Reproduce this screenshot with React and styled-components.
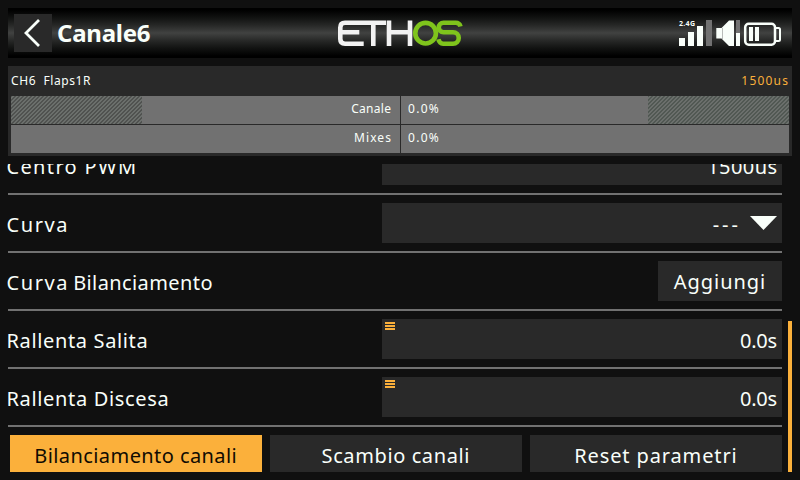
import React from "react";
import styled, { createGlobalStyle } from "styled-components";

const color = {
  screen: "#101010",
  panel: "#292929",
  track: "#717171",
  accent: "#fbb03b",
  text: "#f9fffa",
};

const GlobalStyle = createGlobalStyle`
  *, *::before, *::after { box-sizing: border-box; }
  body { margin: 0; background: ${color.screen}; }
`;

const Screen = styled.main`
  width: 800px;
  height: 480px;
  padding: 8px;
  overflow: hidden;
  background: ${color.screen};
  color: ${color.text};
  font-family: "Noto Sans", "Open Sans", sans-serif;
  font-size: 20px;
  white-space: pre;
`;

const Text = styled.span`
  letter-spacing: ${(p) => p.$ls || 0}px;
  margin-right: ${(p) => -(p.$ls || 0)}px;
`;

const Header = styled.header`
  display: grid;
  grid-template-columns: 322px 1fr auto;
  height: 50px;
  padding: 6px 10px 6px 6px;
  background: linear-gradient(#000 4%, #121312 20%, #262726 34%, #414241 50%, #262726 66%, #121312 80%, #000 96%);
`;

const TitleGroup = styled.div`
  display: flex;
  align-items: center;
  gap: 5px;
`;

const BackButton = styled.button`
  width: 38px;
  height: 38px;
  padding: 0;
  border: 0;
  background: ${color.panel};
  svg { display: block; }
`;

const Title = styled.h1`
  margin: 0;
  font-size: 24px;
  line-height: 38px;
  font-weight: 700;
  letter-spacing: -0.25px;
`;

const Logo = styled.svg`
  display: block;
  width: 128px;
  height: 38px;
`;

const StatusIcons = styled.svg`
  display: block;
  width: 104px;
  height: 38px;
`;

const Monitor = styled.section`
  height: 90px;
  margin-top: 8px;
  padding: 0 3px 3px;
  background: ${color.panel};
  font-size: 12px;
`;

const MonitorHead = styled.div`
  display: flex;
  justify-content: space-between;
  height: 30px;
  padding-right: 1px;
  line-height: 30px;
`;

const PulseWidth = styled.span`
  color: ${color.accent};
`;

const Bars = styled.div`
  display: grid;
  gap: 1px;
`;

const Bar = styled.div`
  display: grid;
  grid-template-columns: 131px 258px 1px 247px 141px;
  height: 28px;
  line-height: 25px;
  background: ${color.track};
`;

const Limit = styled.div`
  background: ${(p) =>
    p.$tone
      ? `repeating-linear-gradient(135deg, ${p.$tone} 0 1.414px, #6b6f6c 1.414px 2.828px)`
      : "none"};
`;

const BarName = styled.div`
  padding-right: 9px;
  text-align: right;
`;

const Center = styled.div`
  background: ${color.panel};
`;

const BarValue = styled.div`
  padding-left: 7px;
`;

const Viewport = styled.div`
  display: grid;
  grid-template-columns: 774px 4px;
  column-gap: 6px;
  height: 308px;
  margin: 8px 0 0 -8px;
  padding-left: 8px;
  overflow: hidden;
`;

const Form = styled.div`
  margin-top: -27px;
`;

const Row = styled.div`
  display: flex;
  justify-content: space-between;
  height: 58px;
  padding: 8px 0;
  border-bottom: 2px solid ${color.track};
`;

const Label = styled.div`
  margin-left: -1.5px;
  padding-top: 2px;
  line-height: 40px;
`;

const Field = styled.div`
  display: flex;
  align-items: flex-start;
  justify-content: flex-end;
  width: 400px;
  height: 40px;
  padding: 2px 5px 0 3px;
  background: ${color.panel};
  line-height: 40px;
`;

const OptionsMark = styled.span`
  display: grid;
  gap: 1px;
  width: 10px;
  margin: 1px auto 0 0;
  &::before, &::after, i { content: ""; height: 2px; background: ${color.accent}; }
`;

const Arrow = styled.svg`
  width: 27px;
  height: 14px;
  margin: 11px 0 0 12px;
`;

const Button = styled.button`
  height: 40px;
  padding: 2px 1px 0 0;
  border: 0;
  width: ${(p) => p.$width}px;
  background: ${(p) => (p.$active ? color.accent : color.panel)};
  color: ${(p) => (p.$active ? "#100b02" : color.text)};
  font: inherit;
  line-height: 38px;
`;

const Actions = styled.div`
  display: flex;
  gap: 8px;
  padding: 8px 0 0 2px;
`;

const ScrollThumb = styled.div`
  height: 151px;
  margin-top: 157px;
  background: ${color.accent};
`;

const bars = [
  { name: "Canale", ls: 0.3, left: "#505250", right: "#515853" },
  { name: "Mixes", ls: 1.1 },
];

const rows = [
  { label: [["Centro PWM", 1.35]], value: ["1500us", 0.4] },
  { label: [["Curva", 1.6]], value: ["---", 3], select: true },
  { label: [["Curva", 1.6], [" Bilanciamento", 0.4]], add: true },
  { label: [["Rallenta Salita", 0.64]], value: ["0.0s", -0.3], options: true },
  { label: [["Rallenta Discesa", 0.66]], value: ["0.0s", -0.3], options: true },
];

const actions = [
  { text: "Bilanciamento canali", ls: 0.42, active: true },
  { text: "Scambio canali", ls: 0.6 },
  { text: "Reset parametri", ls: 0.87 },
];

function EthosLogo() {
  return (
    <Logo viewBox="336 14 128 38" aria-label="ETHOS">
      <g fill="none" strokeWidth="4.6">
        <path stroke="#f2f2f2" d="M386 22.7H345q-4.7 0-4.7 4.7v11.6q0 4.7 4.7 4.7h18.7M340.3 32.2h19M373.3 22.7V46M389 20.4V46M410 20.4V46M389 32.2h21" />
        <circle cx="425.6" cy="33.2" r="10.3" stroke="#7fc41c" />
        <path stroke="#7fc41c" d="M460.5 26.5q-1-3.8-4.8-3.8h-12.2a4.75 4.75 0 0 0 0 9.5h9.500a5.75 5.75 0 0 1 0 11.500h-10q-3.500 0-4.600-4.400" />
      </g>
    </Logo>
  );
}

function Status() {
  return (
    <StatusIcons viewBox="678 14 104 38">
      <text x="679" y="26" fontSize="7" fontWeight="700" fill={color.text} textLength="16">2.4G</text>
      <path fill={color.text} d="M679 38h6v8h-6zM688 32h6v14h-6zM697 26h6v20h-6z" />
      <path fill={color.track} d="M706 20h6v26h-6zM736 20h4v13h-4z" />
      <path fill={color.text} d="M716.3 28h5.2l7.500-7.500h5v25.500h-5l-7.500-7.500h-5.200zM736 33h4v13h-4z" />
      <path fill="none" stroke="#b8bcb9" strokeWidth="1" d="M722.500 28v11" />
      <rect x="745.2" y="23.800" width="29.800" height="20.900" rx="3.500" fill="none" stroke={color.text} strokeWidth="2.500" />
      <path fill="none" stroke={color.text} strokeWidth="2" d="M776 28h2.500q1.500 0 1.500 1.500v10q0 1.500-1.500 1.500H776" />
      <path fill={color.text} d="M749 27h4v14h-4zM755 27h4v14h-4z" />
    </StatusIcons>
  );
}

function FormRow({ label, value, select, add, options }) {
  return (
    <Row>
      <Label>
        {label.map(([t, ls]) => <Text key={t} $ls={ls}>{t}</Text>)}
      </Label>
      {add ? (
        <Button $width={124}><Text $ls={0.95}>Aggiungi</Text></Button>
      ) : (
        <Field>
          {options && <OptionsMark><i /></OptionsMark>}
          <Text $ls={value[1]}>{value[0]}</Text>
          {select && (
            <Arrow viewBox="0 0 27 14"><path fill={color.text} d="M0 0h27L13.500 14z" /></Arrow>
          )}
        </Field>
      )}
    </Row>
  );
}

export default function App() {
  return (
    <Screen>
      <GlobalStyle />
      <Header>
        <TitleGroup>
          <BackButton aria-label="Indietro">
            <svg width="38" height="38" viewBox="0 0 38 38">
              <path d="M25 6L12 19l13 13" fill="none" stroke={color.text} strokeWidth="2.800" />
            </svg>
          </BackButton>
          <Title>Canale6</Title>
        </TitleGroup>
        <EthosLogo />
        <Status />
      </Header>
      <Monitor>
        <MonitorHead>
          <Text $ls={0.58}>CH6  Flaps1R</Text>
          <PulseWidth><Text $ls={1.2}>1500us</Text></PulseWidth>
        </MonitorHead>
        <Bars>
          {bars.map((b) => (
            <Bar key={b.name}>
              <Limit $tone={b.left} />
              <BarName><Text $ls={b.ls}>{b.name}</Text></BarName>
              <Center />
              <BarValue><Text $ls={1.3}>0.0%</Text></BarValue>
              <Limit $tone={b.right} />
            </Bar>
          ))}
        </Bars>
      </Monitor>
      <Viewport>
        <Form>
          {rows.map((r, i) => <FormRow key={i} {...r} />)}
          <Actions>
            {actions.map((a) => (
              <Button key={a.text} $width={252} $active={a.active}><Text $ls={a.ls}>{a.text}</Text></Button>
            ))}
          </Actions>
        </Form>
        <ScrollThumb />
      </Viewport>
    </Screen>
  );
}
